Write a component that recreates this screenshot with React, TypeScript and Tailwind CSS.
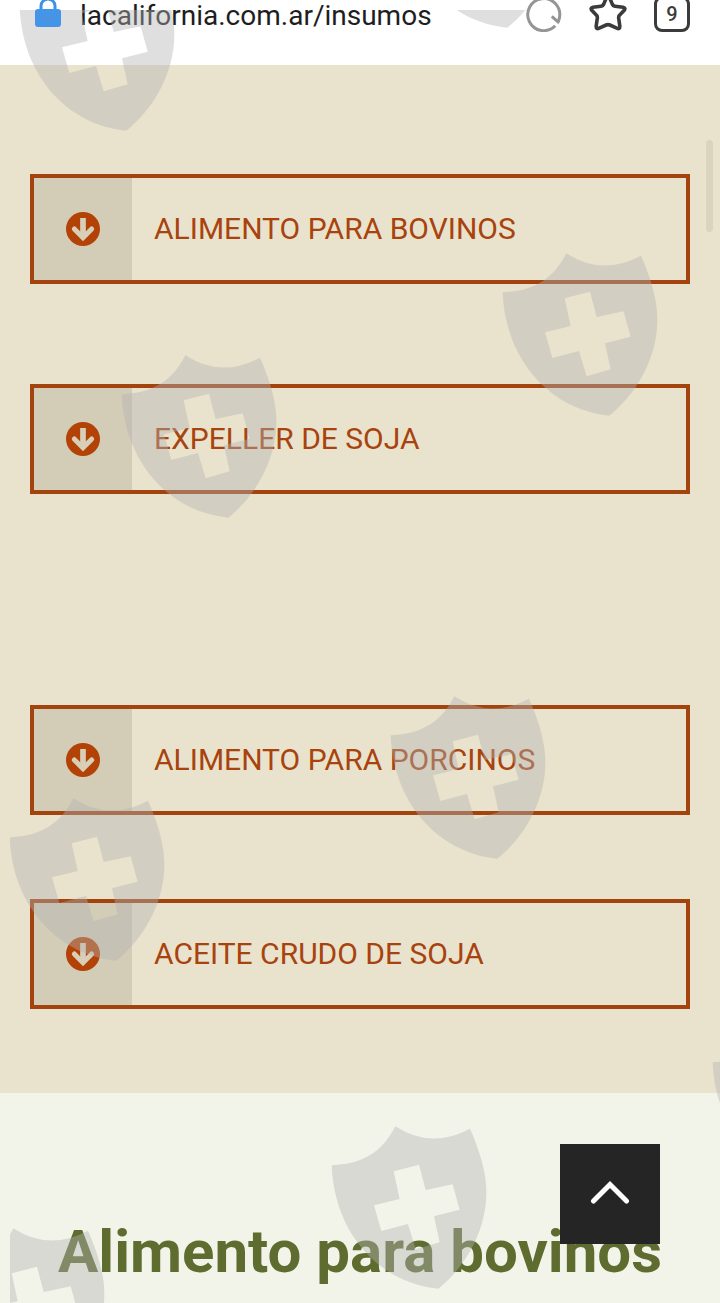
interface Product {
  label: string
  href: string
  spacing: string
}

const products: Product[] = [
  { label: 'Alimento para bovinos', href: '#bovinos', spacing: 'mt-[109px]' },
  { label: 'Expeller de soja', href: '#expeller', spacing: 'mt-[100px]' },
  { label: 'Alimento para porcinos', href: '#porcinos', spacing: 'mt-[211px]' },
  { label: 'Aceite crudo de soja', href: '#aceite', spacing: 'mt-[84px]' },
]

// Top-left corner of every shield, relative to the page
const shields = [
  { x: 19, y: -33 },
  { x: 400, y: -136 },
  { x: 502, y: 252 },
  { x: 121, y: 354 },
  { x: 390, y: 695 },
  { x: 9, y: 797 },
  { x: 712, y: 1022 },
  { x: 331, y: 1125 },
  { x: -51, y: 1227 },
]

const LockIcon = () => (
  <svg className="relative z-20 h-[30px] w-[26px] shrink-0" viewBox="0 0 26 30" fill="none" aria-hidden="true">
    <path d="M6 13V9a7 7 0 0 1 14 0v4" stroke="#3d92e6" strokeWidth="3" />
    <rect x="0" y="12" width="26" height="18" rx="3" fill="#4495e8" />
    <circle cx="13" cy="21" r="2" fill="#5a8fd0" />
  </svg>
)

const ReloadIcon = () => (
  <svg className="size-9" viewBox="0 0 36 36" fill="none" stroke="#959595" strokeWidth="3" aria-hidden="true">
    <path d="M29.2 29.8A16 16 0 1 1 33.4 22L32.2 26.2L25.8 20.4" strokeLinejoin="round" />
  </svg>
)

const StarIcon = () => (
  <svg
    className="size-10"
    viewBox="0 0 40 40"
    fill="none"
    stroke="#3b3b3b"
    strokeWidth="3.6"
    strokeLinejoin="round"
    aria-hidden="true"
  >
    <path d="M18.2 4.2Q20 1 21.8 4.2L24.4 10.4Q25.2 12 27 12.2L35 13.2Q38.2 14 36 16.6L31.5 21.2Q30.4 22.5 30.7 24.2L31.8 32Q32 35.6 28.8 34.2L21.8 31Q20 30.2 18.2 31L11.2 34.2Q8 35.6 8.2 32L9.3 24.2Q9.6 22.5 8.5 21.2L4 16.6Q1.8 14 5 13.2L13 12.2Q14.8 12 15.6 10.4Z" />
  </svg>
)

const ArrowCircleIcon = () => (
  <svg className="size-[34px]" viewBox="0 0 102 102" fill="none" aria-hidden="true">
    <circle cx="51" cy="51" r="51" fill="#b34206" />
    <path d="M51 18V72" stroke="#d9cfb9" strokeWidth="17" />
    <path d="M25 51L51 77L77 51" stroke="#d9cfb9" strokeWidth="15" strokeLinecap="round" />
  </svg>
)

const BrowserBar = () => (
  <header className="flex h-[65px] items-center overflow-hidden bg-white pr-[30px] pb-[38px] pl-[35px]">
    <div className="-mt-1 shrink-0">
      <LockIcon />
    </div>
    <input
      type="text"
      aria-label="Dirección"
      defaultValue="lacalifornia.com.ar/insumos"
      className="ml-[19px] h-10 min-w-0 flex-1 bg-transparent pt-1 text-[28px] text-[#1e1e1e] outline-none"
    />
    <button type="button" aria-label="Recargar" className="shrink-0">
      <ReloadIcon />
    </button>
    <button type="button" aria-label="Favoritos" className="ml-[26px] shrink-0">
      <StarIcon />
    </button>
    <button
      type="button"
      aria-label="Pestañas abiertas"
      className="ml-[26px] flex size-9 shrink-0 items-center justify-center rounded-lg border-3 border-[#3b3b3b] text-[20px] font-medium text-[#3b3b3b]"
    >
      9
    </button>
  </header>
)

const ProductLink = ({ product }: { product: Product }) => (
  <a
    href={product.href}
    className={`flex h-[110px] items-stretch border-4 border-[#a3430e] text-[#a8430e] ${product.spacing}`}
  >
    <span className="flex w-[98px] shrink-0 items-center justify-center bg-[#d3ccb7]">
      <ArrowCircleIcon />
    </span>
    <span className="flex items-center pb-[2px] pl-[22px] text-[30px] uppercase">{product.label}</span>
  </a>
)

const ShieldOverlay = () => (
  <div className="pointer-events-none absolute top-[10px] right-0 bottom-0 left-[10px] z-10 overflow-hidden">
    <svg className="h-full w-full" aria-hidden="true">
      <defs>
        <path
          id="shield"
          fillRule="evenodd"
          transform="scale(0.3333)"
          d="M2 121C70 118 145 100 193 4Q300 74 417 11C450 85 467 150 466 204C466 320 400 430 322 491C150 475 10 330 2 121ZM188 139L264 119L284 195L365 178L386 254L309 274L326 352L254 373L231 297L151 318L129 241L206 222Z"
        />
      </defs>
      <g fill="#b3b3b3" fillOpacity="0.42">
        {shields.map(({ x, y }) => (
          <use key={`${x}-${y}`} href="#shield" x={x - 10} y={y - 10} />
        ))}
      </g>
    </svg>
  </div>
)

export default function App() {
  return (
    <div className="relative overflow-hidden bg-[#f3f4e9] font-[Roboto,sans-serif]">
      <BrowserBar />

      <main>
        {/* Product list */}
        <nav aria-label="Insumos" className="flow-root bg-[#e9e2cc] px-[30px] pb-[84px]">
          {products.map((product) => (
            <ProductLink key={product.label} product={product} />
          ))}
        </nav>

        {/* First product section */}
        <section id="bovinos" className="relative pt-[127px] pb-[19px]">
          <h1 className="text-center text-[60px] leading-[64px] font-bold whitespace-nowrap text-[#5f6c2f]">
            Alimento para bovinos
          </h1>
          <button
            type="button"
            aria-label="Volver arriba"
            className="absolute right-[60px] bottom-[59px] flex size-[100px] items-center justify-center bg-[#252525]"
          >
            <svg
              className="size-10"
              viewBox="0 0 40 40"
              fill="none"
              stroke="#fff"
              strokeWidth="5"
              strokeLinecap="round"
              aria-hidden="true"
            >
              <path d="M3.5 27L20 10.5L36.5 27" />
            </svg>
          </button>
        </section>
      </main>

      <ShieldOverlay />

      {/* Scroll thumb */}
      <div className="absolute top-[140px] right-[7px] h-[92px] w-[7px] rounded-full bg-[#dad3be]" />
    </div>
  )
}
